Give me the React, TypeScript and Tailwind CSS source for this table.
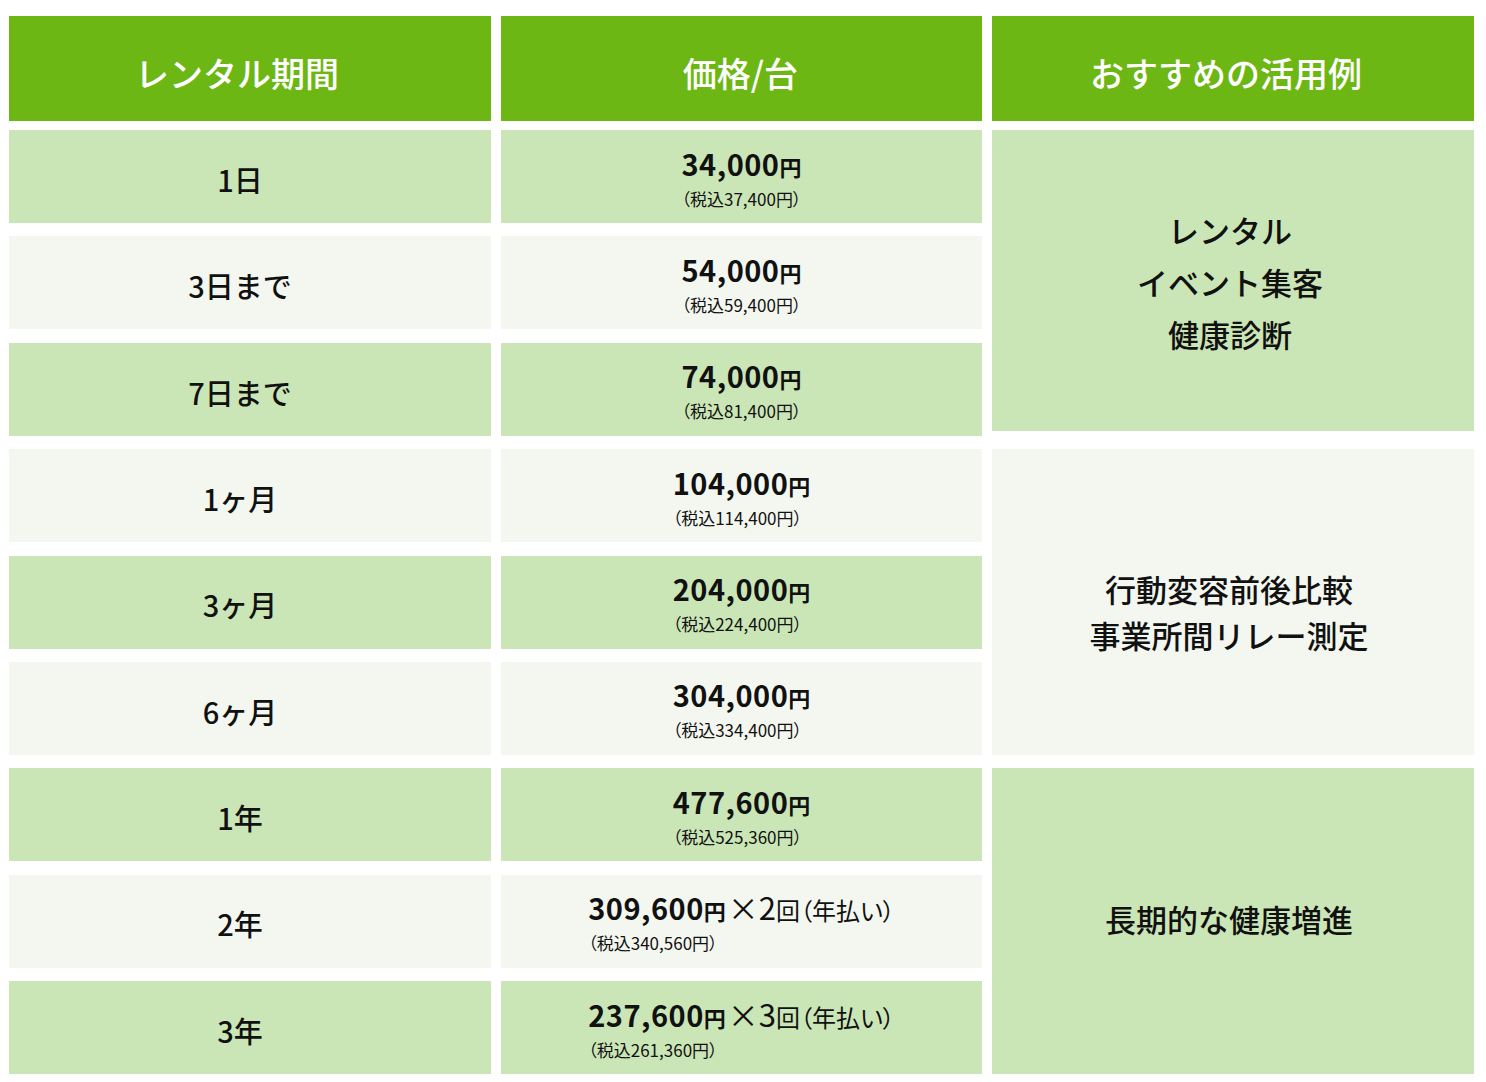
import React from "react";

const G = "bg-[#cbe6b6]";
const W = "bg-[#f4f7f0]";

type Row = { period: string; main: string; sub: string; times?: string };

const rows: Row[] = [
  { period: "1日", main: "34,000", sub: "（税込37,400円）" },
  { period: "3日まで", main: "54,000", sub: "（税込59,400円）" },
  { period: "7日まで", main: "74,000", sub: "（税込81,400円）" },
  { period: "1ヶ月", main: "104,000", sub: "（税込114,400円）" },
  { period: "3ヶ月", main: "204,000", sub: "（税込224,400円）" },
  { period: "6ヶ月", main: "304,000", sub: "（税込334,400円）" },
  { period: "1年", main: "477,600", sub: "（税込525,360円）" },
  { period: "2年", main: "309,600", sub: "（税込340,560円）", times: "2" },
  { period: "3年", main: "237,600", sub: "（税込261,360円）", times: "3" },
];

const rowStart = [
  "row-start-1",
  "row-start-2",
  "row-start-3",
  "row-start-4",
  "row-start-5",
  "row-start-6",
  "row-start-7",
  "row-start-8",
  "row-start-9",
];

export default function App() {
  return (
    <div
      className="w-[1486px] h-[1082px] bg-white pt-[16px] pl-[9px] text-[#111]"
      style={{ fontFamily: '"Noto Sans CJK JP", "Noto Sans", sans-serif' }}
    >
      <div className="grid grid-cols-[482px_481px_482px] gap-x-[10px] h-[105px]">
        <div className="bg-[#6db714] flex items-center justify-center text-white text-[34px] font-medium pt-[8px] pr-[26px]">
          レンタル期間
        </div>
        <div className="bg-[#6db714] flex items-center justify-center text-white text-[34px] font-medium pt-[8px] pr-[2px]">
          価格/台
        </div>
        <div className="bg-[#6db714] flex items-center justify-center text-white text-[34px] font-medium pt-[8px] pr-[14px]">
          おすすめの活用例
        </div>
      </div>
      <div className="mt-[9px] grid grid-cols-[482px_481px_482px] grid-rows-[repeat(9,93px)] gap-x-[10px] gap-y-[13.4px]">
        {rows.map((r, i) => {
          const bg = i % 2 === 0 ? G : W;
          return (
            <React.Fragment key={r.period}>
              <div
                className={`${bg} ${rowStart[i]} col-start-1 flex items-center justify-center text-[29px] font-medium pt-[6px] pr-[20px]`}
              >
                {r.period}
              </div>
              <div
                className={`${bg} ${rowStart[i]} col-start-2 flex items-center justify-center pt-[4px] [font-feature-settings:'palt']`}
              >
                <div className="inline-block text-left">
                  <div className="leading-[34px] whitespace-nowrap">
                    <span className="text-[29px] font-bold tracking-[0.5px]">{r.main}</span>
                    <span className="text-[22px] font-bold">円</span>
                    {r.times && (
                      <>
                        <span className="text-[31px] font-normal ml-[2px]">×{r.times}</span>
                        <span className="text-[24px] font-normal">回</span>
                        <span className="text-[24px] font-normal">（年払い）</span>
                      </>
                    )}
                  </div>
                  <div className="text-[17px] leading-[26px] whitespace-nowrap">{r.sub}</div>
                </div>
              </div>
            </React.Fragment>
          );
        })}
        <div
          className={`${G} col-start-3 row-start-1 row-span-3 self-start h-[301px] flex items-center justify-center text-center text-[31px] font-medium leading-[52px] pt-[2px] pr-[6px]`}
        >
          <div>
            レンタル
            <br />
            イベント集客
            <br />
            健康診断
          </div>
        </div>
        <div
          className={`${W} col-start-3 row-start-4 row-span-3 flex items-center justify-center text-center text-[31px] font-medium leading-[46px] pt-[20px] pr-[8px]`}
        >
          <div>
            行動変容前後比較
            <br />
            事業所間リレー測定
          </div>
        </div>
        <div
          className={`${G} col-start-3 row-start-7 row-span-3 flex items-center justify-center text-center text-[31px] font-medium pb-[4px] pr-[8px]`}
        >
          長期的な健康増進
        </div>
      </div>
    </div>
  );
}
